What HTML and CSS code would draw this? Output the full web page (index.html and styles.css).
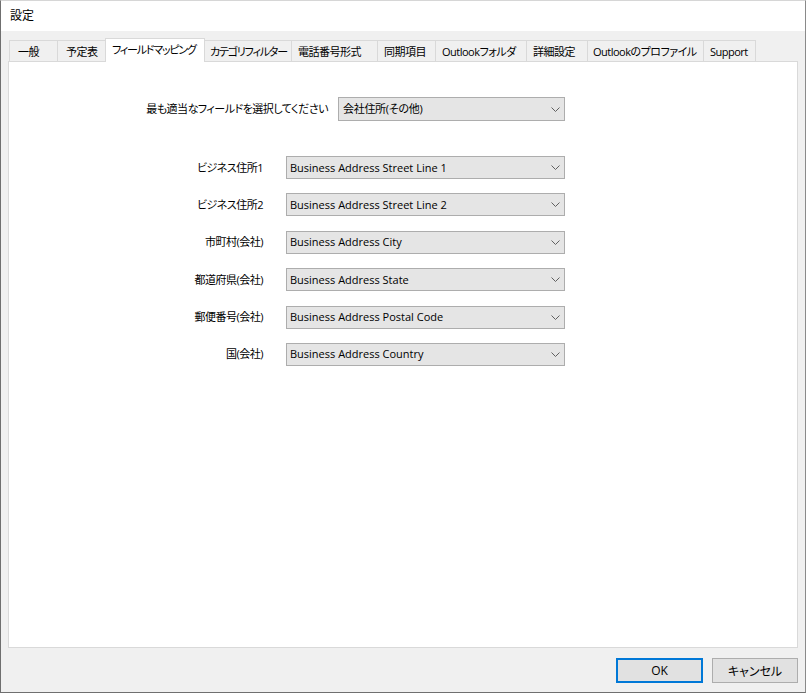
FILE: index.html
```html
<!DOCTYPE html>
<html lang="ja">
<head>
<meta charset="utf-8">
<title>設定</title>
<link rel="stylesheet" href="styles.css">
</head>
<body>
<div class="window">
  <div class="titlebar">設定</div>
  <div class="client">
    <div class="tabs">
      <div class="tab tab-general">一般</div>
      <div class="tab tab-calendar">予定表</div>
      <div class="tab tab-mapping tab-active">フィールドマッピング</div>
      <div class="tab tab-category">カテゴリフィルター</div>
      <div class="tab tab-phone">電話番号形式</div>
      <div class="tab tab-sync">同期項目</div>
      <div class="tab tab-folder">Outlookフォルダ</div>
      <div class="tab tab-advanced">詳細設定</div>
      <div class="tab tab-profile">Outlookのプロファイル</div>
      <div class="tab tab-support">Support</div>
    </div>
    <div class="panel">
      <div class="form">
        <div class="primary-row">
          <div class="label">最も適当なフィールドを選択してください</div>
          <div class="combo combo-primary"><span class="combo-text">会社住所(その他)</span><svg class="chev" width="9" height="5" viewBox="0 0 9 5"><polyline points="0.5,0.5 4.5,4.5 8.5,0.5" fill="none" stroke="#606060" stroke-width="1"/></svg></div>
        </div>
        <div class="map-grid">
          <div class="label">ビジネス住所1</div>
          <div class="combo"><span class="combo-text">Business Address Street Line 1</span><svg class="chev" width="9" height="5" viewBox="0 0 9 5"><polyline points="0.5,0.5 4.5,4.5 8.5,0.5" fill="none" stroke="#606060" stroke-width="1"/></svg></div>
          <div class="label">ビジネス住所2</div>
          <div class="combo"><span class="combo-text">Business Address Street Line 2</span><svg class="chev" width="9" height="5" viewBox="0 0 9 5"><polyline points="0.5,0.5 4.5,4.5 8.5,0.5" fill="none" stroke="#606060" stroke-width="1"/></svg></div>
          <div class="label">市町村(会社)</div>
          <div class="combo"><span class="combo-text">Business Address City</span><svg class="chev" width="9" height="5" viewBox="0 0 9 5"><polyline points="0.5,0.5 4.5,4.5 8.5,0.5" fill="none" stroke="#606060" stroke-width="1"/></svg></div>
          <div class="label">都道府県(会社)</div>
          <div class="combo"><span class="combo-text">Business Address State</span><svg class="chev" width="9" height="5" viewBox="0 0 9 5"><polyline points="0.5,0.5 4.5,4.5 8.5,0.5" fill="none" stroke="#606060" stroke-width="1"/></svg></div>
          <div class="label">郵便番号(会社)</div>
          <div class="combo"><span class="combo-text">Business Address Postal Code</span><svg class="chev" width="9" height="5" viewBox="0 0 9 5"><polyline points="0.5,0.5 4.5,4.5 8.5,0.5" fill="none" stroke="#606060" stroke-width="1"/></svg></div>
          <div class="label">国(会社)</div>
          <div class="combo"><span class="combo-text">Business Address Country</span><svg class="chev" width="9" height="5" viewBox="0 0 9 5"><polyline points="0.5,0.5 4.5,4.5 8.5,0.5" fill="none" stroke="#606060" stroke-width="1"/></svg></div>
        </div>
      </div>
    </div>
    <div class="footer">
      <button class="btn btn-default">OK</button>
      <button class="btn">キャンセル</button>
    </div>
  </div>
</div>
</body>
</html>
```

FILE: styles.css
```css
html, body {
  margin: 0;
  padding: 0;
  background: #ffffff;
}

body {
  width: 806px;
  height: 693px;
  overflow: hidden;
  font-family: "Open Sans", "Noto Sans CJK JP", sans-serif;
  font-size: 11px;
  color: #000000;
  font-feature-settings: "palt";
}

.window {
  width: 806px;
  height: 693px;
  box-sizing: border-box;
  border-left: 1px solid #6f6f6f;
  border-right: 1px solid #8a8a8a;
  border-bottom: 1px solid #6f6f6f;
  border-top: 1px solid #d6d6d6;
  display: flex;
  flex-direction: column;
}

.titlebar {
  height: 30px;
  background: #ffffff;
  padding-left: 9px;
  line-height: 29px;
  font-size: 12px;
}

.client {
  flex: 1;
  background: #f0f0f0;
  padding: 7px 7px 0 7px;
  display: flex;
  flex-direction: column;
}

/* ---- tabs ---- */
.tabs {
  display: flex;
  align-items: flex-end;
  height: 23px;
  padding-left: 1px;
  position: relative;
  z-index: 1;
}

.tab {
  height: 21px;
  box-sizing: border-box;
  padding: 0 0 0 6px;
  line-height: 21px;
  border: 1px solid #d9d9d9;
  border-bottom: none;
  margin-left: -1px;
  background: #f0f0f0;
  white-space: nowrap;
  overflow: hidden;
  letter-spacing: -0.5px;
}

.tab:first-child {
  margin-left: 0;
}

.tab-active {
  height: 24px;
  background: #ffffff;
  margin-bottom: -1px;
  line-height: 20px;
  padding-top: 1px;
}

.tab-general  { width: 49px; padding-left: 8px; }
.tab-calendar { width: 49px; padding-left: 8px; }
.tab-mapping  { width: 100px; letter-spacing: -1.2px; }
.tab-category { width: 88px; padding-left: 5px; letter-spacing: -1.2px; }
.tab-phone    { width: 87px; }
.tab-sync     { width: 59px; }
.tab-folder   { width: 92px; }
.tab-advanced { width: 62px; }
.tab-profile  { width: 117px; padding-left: 5px; }
.tab-support  { width: 53px; }

/* ---- panel ---- */
.panel {
  height: 587px;
  box-sizing: border-box;
  background: #ffffff;
  border: 1px solid #d9d9d9;
  padding-top: 35px;
}

.form {
  width: 556px;
  display: flex;
  flex-direction: column;
  align-items: flex-end;
}

.primary-row {
  display: flex;
  align-items: center;
  gap: 10px;
}

.label {
  white-space: nowrap;
  line-height: 16px;
  letter-spacing: -0.5px;
}

.combo {
  height: 23px;
  box-sizing: border-box;
  width: 279px;
  background: #e5e5e5;
  border: 1px solid #adadad;
  display: flex;
  align-items: center;
  justify-content: space-between;
  padding: 0 4px 0 3px;
}

.combo-primary {
  width: 227px;
  height: 24px;
  padding-left: 4px;
}

.combo-text {
  white-space: nowrap;
  line-height: 16px;
}

.combo-primary .combo-text {
  letter-spacing: -0.3px;
}

.chev {
  display: block;
  flex: none;
}

.map-grid {
  margin-top: 35px;
  display: grid;
  grid-template-columns: auto 279px;
  column-gap: 23px;
  row-gap: 14.4px;
  align-items: center;
}

.map-grid .label {
  justify-self: end;
}

/* ---- footer ---- */
.footer {
  display: flex;
  justify-content: flex-end;
  gap: 9px;
  padding-top: 10px;
}

.btn {
  width: 86px;
  height: 25px;
  box-sizing: border-box;
  background: #e1e1e1;
  border: 1px solid #adadad;
  font-family: "Open Sans", "Noto Sans CJK JP", sans-serif;
  font-size: 12px;
  color: #000000;
  padding: 0;
  margin: 0;
  font-feature-settings: "palt";
}

.btn-default {
  width: 87px;
  border: 2px solid #0078d7;
}
```
